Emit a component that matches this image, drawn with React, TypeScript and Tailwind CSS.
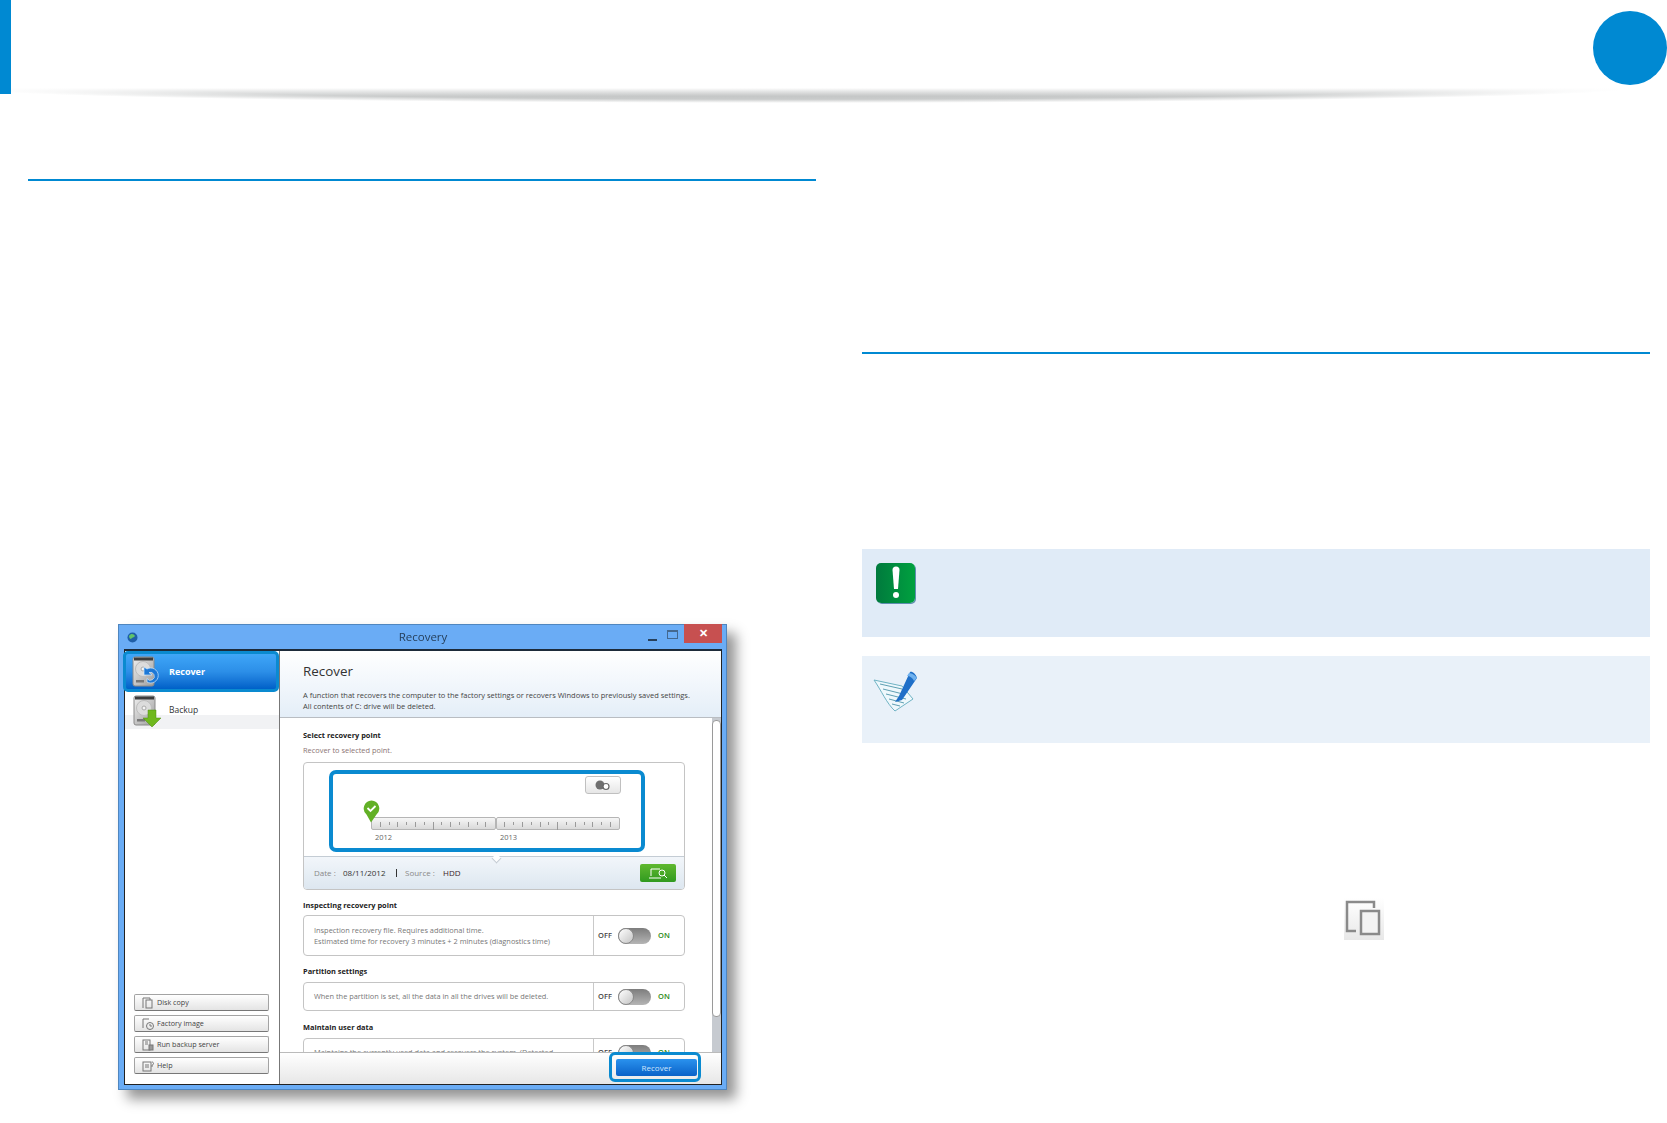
import { ReactNode } from 'react'

const HddIcon = ({ children }: { children: ReactNode }) => (
  <svg width="30" height="32" viewBox="0 0 30 32" className="shrink-0">
    <defs>
      <linearGradient id="hdd" x1="0" y1="0" x2="1" y2="1">
        <stop offset="0" stopColor="#f0f0f0" />
        <stop offset="1" stopColor="#9c9c9c" />
      </linearGradient>
    </defs>
    <rect x="1" y="1" width="21" height="29" rx="2" fill="url(#hdd)" stroke="#8a8a8a" />
    <rect x="2" y="1.5" width="19" height="3" fill="#3d3d3d" />
    <circle cx="11" cy="13" r="7.5" fill="#dcdcdc" stroke="#bdbdbd" />
    <circle cx="11" cy="13" r="2" fill="#f5f5f5" stroke="#aaa" />
    <rect x="4" y="24" width="8" height="2.5" fill="#777" />
    {children}
  </svg>
)

const SideButton = ({ label, icon }: { label: string; icon: ReactNode }) => (
  <div className="flex h-[17px] items-center gap-[2px] rounded-[2px] border border-[#a3a3a3] border-b-[#777] bg-gradient-to-b from-white to-[#e4e4e4] pl-[7px] text-[7.2px] text-[#444]">
    <svg width="13" height="12" viewBox="0 0 13 12" fill="none" stroke="#777" strokeWidth="1">
      {icon}
    </svg>
    {label}
  </div>
)

const Toggle = () => (
  <div className="flex h-[16px] w-[33px] items-center rounded-full bg-gradient-to-b from-[#7d7d7d] to-[#b5b5b5]">
    <div className="h-[16px] w-[16px] rounded-full border border-[#8a8a8a] bg-gradient-to-br from-white to-[#c4c4c4]" />
  </div>
)

const ToggleCell = () => (
  <div className="flex w-[91px] shrink-0 items-center border-l border-[#c9c9c9] pl-[4px]">
    <span className="w-[16px] text-[7.5px] font-semibold text-[#444]">OFF</span>
    <span className="ml-[4px]"><Toggle /></span>
    <span className="ml-[7px] text-[7.5px] font-semibold text-[#2b8a16]">ON</span>
  </div>
)

const Ticks = () => (
  <div className="flex h-full items-start justify-around px-[4px] pt-[4px]">
    {[0, 1, 2, 3, 4, 5, 6, 7, 8, 9, 10, 11, 12].map(i => (
      <div key={i} className={`w-px bg-[#9a9a9a] ${i === 6 ? 'h-[8px]' : i % 2 === 0 ? 'h-[5px]' : 'h-[3px]'}`} />
    ))}
  </div>
)

const Heading = ({ children, className }: { children: ReactNode; className: string }) => (
  <div className={`h-[12px] text-[7.4px] leading-[12px] font-bold text-[#222] ${className}`}>{children}</div>
)

const RecoveryWindow = () => (
  <div className="ml-[90px] mt-[443px] w-[609px] border border-[#4f86bf] bg-[#6aacf5] pb-[4px] pl-[5px] pr-[4px] text-[#555] shadow-[9px_9px_12px_rgba(0,0,0,0.42)] blur-[0.4px] [font-family:'Open_Sans',sans-serif]">
    <div className="relative flex h-[24px] items-center justify-center text-[11.5px] text-[#26405c]">
      <svg width="11" height="11" viewBox="0 0 11 11" className="absolute left-[3px] top-[7px]">
        <circle cx="5.5" cy="5.5" r="5" fill="#1f5fa8" />
        <path d="M2 4c2-3 5-2 6 0-1 2-3 1-4 3-1 0-2-1-2-3z" fill="#5fc36a" />
      </svg>
      Recovery
      <div className="absolute right-[65px] top-[14px] h-[1.5px] w-[9px] bg-[#26405c]" />
      <div className="absolute right-[44px] top-[5px] h-[9px] w-[11px] border border-[#44688f] border-t-2" />
      <div className="absolute -top-px right-0 flex h-[19px] w-[38px] items-center justify-center bg-[#c75050] text-[11px] font-bold text-white">✕</div>
    </div>

    <div className="flex h-[436px] border border-t-2 border-[#222] border-t-[#1d2b3a] bg-white">
      {/* sidebar */}
      <div className="relative flex w-[155px] shrink-0 flex-col border-r border-[#777]">
        <div className="-ml-[2px] flex h-[41px] items-center gap-[7px] rounded-[5px] border-[3px] border-[#0a8ad0] bg-gradient-to-b from-[#3fa6f8] via-[#2c8fe8] to-[#0060c8] pl-[6px] text-[9px] font-bold text-white">
          <HddIcon>
            <path d="M15 26a7.5 7.5 0 1 0 0-13l-3-2v8h8l-3-2.5a4 4 0 1 1-2 6z" fill="#1d78d6" stroke="#cfe8ff" strokeWidth="0.7" />
          </HddIcon>
          Recover
        </div>
        <div className="relative flex h-[37px] items-center pl-[8px] text-[8.5px] text-[#333]">
          <div className="absolute inset-x-0 bottom-0 h-[14px] bg-[#f1f2f4]" />
          <div className="relative flex items-center gap-[6px]">
            <HddIcon>
              <path d="M15 15h8v8h5l-9 9-9-9h5z" fill="#6fb81e" stroke="#4d8f10" strokeWidth="0.5" />
            </HddIcon>
            Backup
          </div>
        </div>
        <div className="mb-[10px] ml-[9px] mr-[10px] mt-auto flex flex-col gap-[4px]">
          <SideButton label="Disk copy" icon={<><path d="M1 11V1h7v2" /><rect x="4" y="3" width="6" height="8" /></>} />
          <SideButton label="Factory image" icon={<><path d="M1 10V1h6" /><circle cx="8" cy="8" r="3.5" /><path d="M8 6v2h2" /></>} />
          <SideButton label="Run backup server" icon={<><rect x="1" y="1" width="7" height="10" /><path d="M3 3h3M3 5h3" /><rect x="7" y="6" width="4" height="5" fill="#999" /></>} />
          <SideButton label="Help" icon={<><rect x="1" y="2" width="8" height="9" /><path d="M3 5h4M3 7h4" /><path d="M10 2c2 0 2 3 0 3v2" /></>} />
        </div>
      </div>

      {/* main */}
      <div className="flex min-w-0 flex-1 flex-col">
        <div className="h-[67px] shrink-0 border-b border-[#b9bdc2] bg-gradient-to-b from-white to-[#e4eef8] pl-[23px] pt-[10px]">
          <div className="h-[20px] text-[13.4px] leading-[20px] text-[#333]">Recover</div>
          <div className="mt-[9px] whitespace-nowrap text-[7.5px] leading-[11px] text-[#444]">
            A function that recovers the computer to the factory settings or recovers Windows to previously saved settings.
            <br />
            All contents of C: drive will be deleted.
          </div>
        </div>

        <div className="flex h-[334px] shrink-0 overflow-hidden">
          <div className="w-[405px] shrink-0 pl-[23px]">
            <Heading className="mt-[11px]">Select recovery point</Heading>
            <div className="mt-[3px] h-[12px] text-[7.4px] leading-[12px] text-[#8b7474]">Recover to selected point.</div>

            <div className="relative mt-[6px] w-[382px] overflow-hidden rounded-[4px] border border-[#c4c4c4]">
              <div className="h-[93px]">
                <div className="flex justify-end pr-[63px] pt-[13px]">
                  <div className="flex h-[18px] w-[36px] items-center justify-center rounded-[3px] border border-[#c0c0c0] bg-gradient-to-b from-white to-[#e6e6e6]">
                    <svg width="18" height="12" viewBox="0 0 18 12">
                      <circle cx="6" cy="6" r="4.5" fill="#6f6f6f" />
                      <circle cx="12" cy="7.5" r="3" fill="#fff" stroke="#666" strokeWidth="1.2" />
                    </svg>
                  </div>
                </div>
                <div className="ml-[67px] mt-[23px] flex h-[13px] w-[249px]">
                  <div className="flex-1 rounded-[2px] border border-[#b5b5b5] bg-gradient-to-b from-[#f6f6f6] to-[#dadada]"><Ticks /></div>
                  <div className="flex-1 rounded-[2px] border border-[#b5b5b5] bg-gradient-to-b from-[#f6f6f6] to-[#dadada]"><Ticks /></div>
                </div>
                <div className="ml-[71px] mt-[2px] flex text-[7.5px] leading-[10px] text-[#666]">
                  <span className="w-[125px]">2012</span>
                  <span>2013</span>
                </div>
              </div>

              <div className="relative flex h-[33px] items-center border-t border-[#c4ccd4] bg-gradient-to-b from-[#f2f6fa] to-[#dde7f0] pl-[10px] text-[8px]">
                <div className="absolute -top-px left-[189px] h-[7px] w-[7px] -translate-y-[1px] rotate-45 border-b border-r border-[#c4ccd4] bg-white" />
                <span className="w-[29px] text-[#888]">Date :</span>
                <span className="w-[53px] text-[#333]">08/11/2012</span>
                <span className="h-[8px] w-px bg-[#333]" />
                <span className="ml-[8px] w-[38px] text-[#888]">Source :</span>
                <span className="text-[#3a1a2a]">HDD</span>
                <div className="ml-auto mr-[8px] flex h-[18px] w-[36px] items-center justify-center rounded-[2px] bg-gradient-to-b from-[#5fb82f] to-[#2f9a20]">
                  <svg width="20" height="13" viewBox="0 0 20 13" fill="none" stroke="#fff" strokeWidth="1">
                    <path d="M3 9V2h9M1 11h12" />
                    <circle cx="14" cy="6" r="3" />
                    <path d="M16 8l3 3" />
                  </svg>
                </div>
              </div>

              <div className="absolute left-[25px] top-[7px] h-[82px] w-[316px] rounded-[7px] border-[4px] border-[#0a8ad0]" />
              <svg width="17" height="23" viewBox="0 0 17 23" className="absolute left-[59px] top-[37px]">
                <path d="M8.5 0.5a8 8 0 0 1 5 14L8 22.5 3.5 14.5a8 8 0 0 1 5-14z" fill="#62b026" />
                <path d="M4.5 8l3 3 5-5" fill="none" stroke="#fff" strokeWidth="1.8" />
              </svg>
            </div>

            <Heading className="mt-[9px]">Inspecting recovery point</Heading>
            <div className="mt-[4px] flex h-[41px] w-[382px] rounded-[4px] border border-[#c4c4c4]">
              <div className="flex-1 self-center pl-[10px] text-[7.4px] leading-[11px] text-[#777]">
                Inspection recovery file. Requires additional time.
                <br />
                Estimated time for recovery 3 minutes + 2 minutes (diagnostics time)
              </div>
              <ToggleCell />
            </div>

            <Heading className="mt-[9px]">Partition settings</Heading>
            <div className="mt-[5px] flex h-[29px] w-[382px] rounded-[4px] border border-[#c4c4c4]">
              <div className="flex-1 self-center pl-[10px] text-[7.4px] text-[#777]">When the partition is set, all the data in all the drives will be deleted.</div>
              <ToggleCell />
            </div>

            <Heading className="mt-[10px]">Maintain user data</Heading>
            <div className="mt-[5px] flex h-[29px] w-[382px] rounded-[4px] border border-[#c4c4c4]">
              <div className="flex-1 self-center pl-[10px] text-[7.4px] text-[#777]">Maintains the currently used data and recovers the system. (Detected</div>
              <ToggleCell />
            </div>
          </div>

          <div className="ml-[27px] w-[9px] bg-[#c6cad0]">
            <div className="mt-[2px] h-[297px] rounded-[4px] border border-[#9a9a9a] bg-white" />
          </div>
        </div>

        <div className="relative flex min-h-0 flex-1 items-center justify-end border-t border-[#bbb] bg-gradient-to-b from-white to-[#e7e7e7] pr-[24px]">
          <div className="-mt-[2px] flex h-[17px] w-[81px] items-center justify-center rounded-[2px] bg-gradient-to-b from-[#2a92ee] to-[#0a62c8] text-[8px] text-[#cfe6fb]">Recover</div>
          <div className="absolute -top-px right-[20px] h-[30px] w-[92px] rounded-[6px] border-[3px] border-[#0a8ad0]" />
        </div>
      </div>
    </div>
  </div>
)

const App = () => {
  return (
    <div className="relative h-[1123px] w-[1667px] overflow-hidden bg-white">
      <div className="flex h-[94px] items-start justify-between">
        <div className="h-[94px] w-[11px] bg-[#0089d2]" />
        <div className="mt-[11px] h-[74px] w-[74px] rounded-full bg-[#0089d2]" />
      </div>
      <div className="-mt-[6px] h-[15px] w-full bg-[linear-gradient(to_bottom,#ffffff,rgba(255,255,255,0)_55%),radial-gradient(ellipse_830px_15px_at_48%_0,#b9bbbb_0%,#c9cbcb_75%,#ffffff_100%)]" />

      <div className="flex">
        <div className="ml-[28px] mt-[76px] w-[788px] shrink-0">
          <div className="h-[2px] bg-[#0089d2]" />
          <RecoveryWindow />
        </div>

        <div className="ml-[46px] mt-[249px] w-[788px] shrink-0">
          <div className="h-[2px] bg-[#0089d2]" />

          <div className="mt-[195px] h-[88px] bg-[#e0ebf7] pl-[14px] pt-[14px]">
            <div className="flex h-[40px] w-[39px] items-center justify-center rounded-[5px] bg-gradient-to-r from-[#007a3d] to-[#00a13f] shadow-[1px_1px_0_#5f8db0]">
              <svg width="10" height="34" viewBox="0 0 10 34">
                <path d="M1.5 4a3.5 3.5 0 0 1 7 0L7 23H3z" fill="#fff" />
                <circle cx="5" cy="29" r="3" fill="#fff" />
              </svg>
            </div>
          </div>

          <div className="mt-[19px] h-[87px] bg-[#e9f1f9] pl-[11px] pt-[14px]">
            <svg width="45" height="42" viewBox="0 0 45 42">
              <path d="M1 10l28 6 11 13-18 12C14 34 8 20 1 10z" fill="#eef8fc" stroke="#6fb3c4" />
              <path d="M7 14l22 5M10 19l20 5M13 24l20 5M16 29l15 4M19 34l8 2" stroke="#5e9fb2" strokeWidth="1" />
              <path d="M26 26l-4 6 7-2L44 8c-1-4-5-7-7-6z" fill="#1f6fc8" />
              <path d="M36 3c3 0 7 3 8 5l-3 3c-1-3-4-5-7-5z" fill="#6fb1ee" />
            </svg>
          </div>

          <div className="ml-[482px] mt-[155px] h-[42px] w-[40px]">
            <svg width="40" height="42" viewBox="0 0 40 42" fill="none">
              <defs>
                <linearGradient id="copybg" x1="0" y1="0" x2="0" y2="1">
                  <stop offset="0" stopColor="#ffffff" />
                  <stop offset="1" stopColor="#e8e8e8" />
                </linearGradient>
              </defs>
              <rect width="40" height="42" fill="url(#copybg)" />
              <path d="M12 33H3V4h27v6" stroke="#8a8a8a" strokeWidth="2.5" />
              <rect x="17" y="13" width="18" height="23" stroke="#8a8a8a" strokeWidth="2.5" fill="#f3f3f3" />
            </svg>
          </div>
        </div>
      </div>
    </div>
  )
}

export default App
